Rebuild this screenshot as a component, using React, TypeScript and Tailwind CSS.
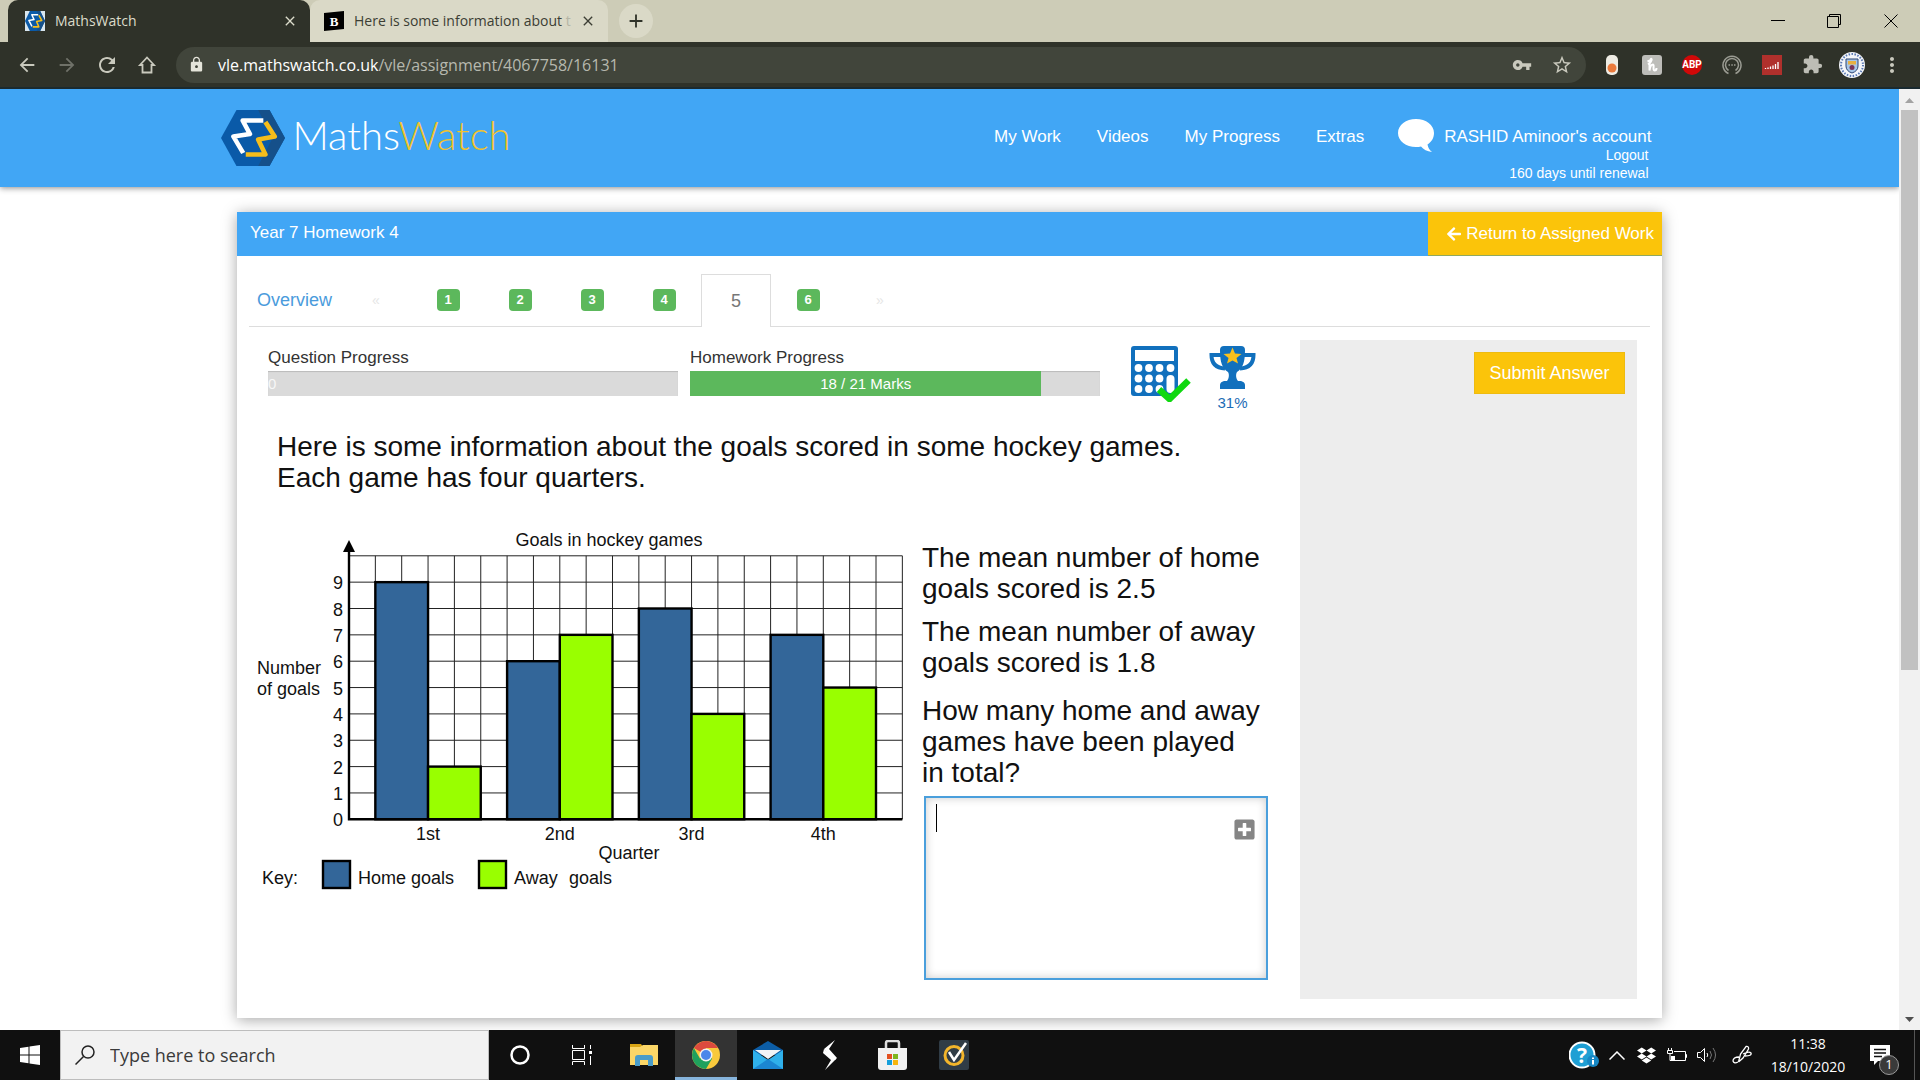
import { useState } from "react";
import type { ReactNode } from "react";
import {
  MdAdd,
  MdArrowBack,
  MdArrowForward,
  MdClose,
  MdExtension,
  MdLock,
  MdMoreVert,
  MdRefresh,
  MdStarBorder,
  MdVpnKey,
} from "react-icons/md";
import { FaArrowLeft, FaDropbox, FaPlusSquare } from "react-icons/fa";

const HOME = "#336699";
const AWAY = "#99ff00";

const quarters = [
  { label: "1st", home: 9, away: 2 },
  { label: "2nd", home: 6, away: 7 },
  { label: "3rd", home: 8, away: 4 },
  { label: "4th", home: 7, away: 5 },
];

/* ---------- browser frame ---------- */

function HexLogo({ className }: { className: string }) {
  return (
    <svg viewBox="0 0 62 56" preserveAspectRatio="none" className={className} aria-hidden="true">
      <path d="M15 0H47L62 28L47 56H15L0 28Z" fill="#0a5aa8" />
      <path d="M47 0L62 28L47 56H36L50 28L36 0Z" fill="#15508a" />
      <g fill="none" strokeWidth="4.500" strokeLinejoin="round">
        <path d="M41 10.500H21L28 24L12 26.500L21.500 43" stroke="#fff" />
        <path d="M43 12L52 26.500L36 29.500L43 44.500H24" stroke="#f5bd1b" />
      </g>
    </svg>
  );
}

function TabStrip() {
  return (
    <div className="flex h-[42px] items-stretch bg-[#cdccb7] pl-2">
      <div className="flex w-[302px] items-center rounded-t-[10px] bg-[#2f3229] pr-3 pl-[17px] text-[#dcdccb]">
        <span className="flex size-5 items-center bg-[#d9e6ee]">
          <HexLogo className="h-5 w-5" />
        </span>
        <span className="ml-[10px] flex-1 text-sm">MathsWatch</span>
        <button type="button" aria-label="Close MathsWatch tab">
          <MdClose size={16} />
        </button>
      </div>
      <div className="flex w-[298px] items-center rounded-t-[10px] bg-[#dad9c7] pr-3 pl-[14px] text-[#3c3e34]">
        <svg viewBox="0 0 20 20" className="size-5" aria-hidden="true">
          <path d="M0 2L20 0V18L0 20Z" fill="#000" />
          <text x="10" y="15" textAnchor="middle" fontSize="13" fontWeight="900" fontFamily="Liberation Serif, serif" fill="#fff">
            B
          </text>
        </svg>
        <span className="ml-[10px] flex-1 overflow-hidden text-sm whitespace-nowrap">
          Here is some information about <span className="text-[#b5b5a5]">t</span>
        </span>
        <button type="button" aria-label="Close tab" className="ml-2">
          <MdClose size={16} />
        </button>
      </div>
      <button
        type="button"
        aria-label="New tab"
        className="ml-[11px] flex size-[34px] items-center justify-center self-center rounded-full bg-[#dad9c7] text-[#303329]"
      >
        <MdAdd size={22} />
      </button>
      <div className="ml-auto flex items-center text-black">
        <button type="button" aria-label="Minimise" className="flex w-14 justify-center">
          <svg viewBox="0 0 14 14" className="size-[14px]" stroke="currentColor">
            <path d="M0 6.500H14" />
          </svg>
        </button>
        <button type="button" aria-label="Restore" className="flex w-14 justify-center">
          <svg viewBox="0 0 14 14" className="size-[14px]" fill="none" stroke="currentColor">
            <path d="M.5 2.500H11.500V13.500H.5ZM2.500 2.500V.5H13.500V10.500H11.500" />
          </svg>
        </button>
        <button type="button" aria-label="Close window" className="flex w-[58px] justify-center">
          <svg viewBox="0 0 14 14" className="size-[14px]" stroke="currentColor">
            <path d="M.5 .5L13.500 13.500M13.500 .5L.5 13.500" />
          </svg>
        </button>
      </div>
    </div>
  );
}

function Extension({ label, children }: { label: string; children: ReactNode }) {
  return (
    <button type="button" aria-label={label} className="flex w-10 items-center justify-center">
      {children}
    </button>
  );
}

function Toolbar() {
  return (
    <div className="flex h-[47px] items-center border-b-2 border-[#1a2a30] bg-[#2f3229] pr-2 pl-[7px] text-[#c9c9bd]">
      <button type="button" aria-label="Back" className="flex w-10 justify-center">
        <MdArrowBack size={22} />
      </button>
      <button type="button" aria-label="Forward" className="flex w-10 justify-center text-[#6f7168]">
        <MdArrowForward size={22} />
      </button>
      <button type="button" aria-label="Reload" className="flex w-10 justify-center">
        <MdRefresh size={24} />
      </button>
      <button type="button" aria-label="Home" className="flex w-10 justify-center">
        <svg viewBox="0 0 20 20" className="size-5" fill="none" stroke="currentColor" strokeWidth="1.800">
          <path d="M10 2.500L17 10H14.500V17.500H5.500V10H3Z" />
        </svg>
      </button>
      <div className="ml-[9px] flex h-9 flex-1 items-center rounded-full bg-[#41453b] pr-1 pl-3">
        <MdLock size={17} className="text-[#e4e4da]" />
        <span className="ml-[13px] flex-1 text-base text-[#b6b8ae]">
          <span className="text-white">vle.mathswatch.co.uk</span>/vle/assignment/4067758/16131
        </span>
        <button type="button" aria-label="Passwords" className="flex w-10 justify-center">
          <MdVpnKey size={20} />
        </button>
        <button type="button" aria-label="Bookmark" className="flex w-10 justify-center">
          <MdStarBorder size={22} />
        </button>
      </div>
      <div className="ml-[6px] flex h-9 items-center">
        <Extension label="Toggle">
          <svg viewBox="0 0 12 20" className="h-5 w-3">
            <rect width="12" height="20" rx="5" fill="#eeece4" />
            <circle cx="6" cy="13" r="4.500" fill="#ea7a3c" />
          </svg>
        </Extension>
        <Extension label="Honey">
          <svg viewBox="0 0 20 20" className="size-5">
            <rect width="20" height="20" rx="3" fill="#bdbdb9" />
            <path
              d="M6 9.500C8 8 10.500 5 9.500 4S7 8 7.500 15.500C8 12 9.500 9.500 11 9.500S10.500 15.500 12.500 15.500 14.500 14 14.500 13M5.500 6.500L8 5.500"
              fill="none"
              stroke="#fff"
              strokeWidth="2"
            />
          </svg>
        </Extension>
        <Extension label="Adblock Plus">
          <span className="flex size-5 items-center justify-center rounded-full bg-[#d10808] font-[Roboto,sans-serif] text-[10px] font-bold text-white">
            ABP
          </span>
        </Extension>
        <Extension label="Recorder">
          <svg viewBox="0 0 20 20" className="size-5" fill="none" stroke="#9b9c93" strokeWidth="1.500">
            <path d="M6.500 18.500A9 9 0 1 1 13.500 18.500M6.500 15.500A6.500 6.500 0 1 1 13.500 15.500" />
            <path d="M6.500 10H8M9.300 10H10.800M12 10H13.500" />
          </svg>
        </Extension>
        <Extension label="Signal">
          <svg viewBox="0 0 20 20" className="size-5">
            <rect width="20" height="20" fill="#b0302c" />
            <path d="M3.500 14V13M6 14V12.500M8.500 14V11.500M11 14V10.500M13.500 14V9M16 14V7" stroke="#fff" strokeWidth="1.300" />
          </svg>
        </Extension>
        <Extension label="Extensions">
          <MdExtension size={21} className="text-[#bdbdb5]" />
        </Extension>
        <Extension label="Profile">
          <svg viewBox="0 0 26 26" className="size-[26px]">
            <circle cx="13" cy="13" r="13" fill="#f4f6fa" />
            <circle cx="13" cy="13" r="11" fill="none" stroke="#5a79b4" strokeWidth="2" strokeDasharray="1.500 1.500" />
            <path d="M7 7H19V14Q19 19 13 21Q7 19 7 14Z" fill="#a7c6e8" stroke="#2c4472" />
            <path d="M9 9H17V12.500H9Z" fill="#e8b040" />
            <circle cx="13" cy="15.500" r="2.500" fill="#7a3458" />
          </svg>
        </Extension>
        <Extension label="Menu">
          <MdMoreVert size={24} />
        </Extension>
      </div>
    </div>
  );
}

function Scrollbar() {
  return (
    <div className="flex w-[21px] shrink-0 flex-col items-center bg-[#f1f1f1]" aria-hidden="true">
      <svg viewBox="0 0 21 21" className="size-[21px]">
        <path d="M6 14L10.500 9L15 14Z" fill="#a3a3a3" />
      </svg>
      <div className="h-[560px] w-[17px] bg-[#c1c1c1]" />
      <svg viewBox="0 0 21 21" className="mt-auto size-[21px]">
        <path d="M6 8L10.500 13L15 8Z" fill="#505050" />
      </svg>
    </div>
  );
}

/* ---------- site ---------- */

function SiteHeader() {
  const links = ["My Work", "Videos", "My Progress", "Extras"];

  return (
    <header className="bg-[#41a6f5] shadow-[0_1px_6px_rgba(0,0,0,0.45)]">
      <div className="mx-auto flex h-[98px] max-w-[1458px] items-start pr-[27px]">
        <a href="#home" aria-label="MathsWatch home" className="flex items-start gap-2 pt-[21px]">
          <HexLogo className="h-[56px] w-[64px]" />
          <span className="font-[Lato,sans-serif] text-[40px] leading-[50px] font-light text-white">
            Maths<span className="text-[#f2c32c]">Watch</span>
          </span>
        </a>
        <nav className="mt-9 ml-auto flex gap-9 text-[17px] leading-6 text-white">
          {links.map((link) => (
            <a key={link} href="#nav">
              {link}
            </a>
          ))}
        </nav>
        <svg viewBox="0 0 36 33" className="mt-[30px] ml-[34px] h-[33px] w-9" aria-hidden="true">
          <path
            d="M18 0C28 0 36 6 36 14C36 19 33.500 23 29.500 25.500C30 28.500 31.500 31 34 33C29 32.500 25.500 30.500 23 27.500C21.500 28 20 28 18 28C8 28 0 22 0 14S8 0 18 0Z"
            fill="#fff"
          />
        </svg>
        <div className="mt-9 ml-[10px] flex flex-col items-end text-white">
          <a href="#account" className="text-[17px] leading-6">
            RASHID Aminoor's account
          </a>
          <a href="#logout" className="-mt-[3px] pr-[3px] text-sm leading-[18px]">
            Logout
          </a>
          <span className="pr-[3px] text-sm leading-[18px]">160 days until renewal</span>
        </div>
      </div>
    </header>
  );
}

function QuestionTabs() {
  return (
    <nav className="mx-3 mt-[18px] flex h-[53px] gap-0.5 border-b border-[#dddddd] text-lg">
      <a href="#overview" className="flex w-[90px] items-center px-2 text-[#4a9bdc]">
        Overview
      </a>
      <a href="#prev" aria-label="Previous" className="flex w-[70px] items-center justify-center text-sm text-[#e6e6e6]">
        «
      </a>
      {[1, 2, 3, 4, 5, 6].map((n) =>
        n === 5 ? (
          <a
            key={n}
            href="#q5"
            aria-current="page"
            className="-mb-px flex w-[70px] items-center justify-center border border-b-0 border-[#dddddd] bg-white text-[#777777]"
          >
            5
          </a>
        ) : (
          <a key={n} href="#question" className="flex w-[70px] items-center justify-center">
            <span className="flex h-[22px] w-[23px] items-center justify-center rounded bg-[#5cb85c] text-[13px] font-bold text-white">
              {n}
            </span>
          </a>
        )
      )}
      <a href="#next" aria-label="Next" className="flex w-[70px] items-center justify-center text-sm text-[#e6e6e6]">
        »
      </a>
    </nav>
  );
}

function ProgressRow() {
  return (
    <div className="flex items-start pt-[6px] pl-[19px] text-[#333333]">
      <div className="w-[410px]">
        <div className="text-[17px] leading-6">Question Progress</div>
        <div className="mt-px h-[25px] bg-[#dadada] text-[15px] leading-[25px] text-[#f7f7f7] shadow-[inset_0_1px_1px_rgba(0,0,0,0.15)]">
          0
        </div>
      </div>
      <div className="ml-3 w-[410px]">
        <div className="text-[17px] leading-6">Homework Progress</div>
        <div className="mt-px h-[25px] bg-[#dadada] shadow-[inset_0_1px_1px_rgba(0,0,0,0.15)]">
          <div
            className="h-[25px] bg-[#5cb85c] text-center text-[15px] leading-[25px] text-white"
            style={{ width: `${(18 / 21) * 100}%` }}
          >
            18 / 21 Marks
          </div>
        </div>
      </div>
      <svg viewBox="0 0 60 56" className="ml-[31px] h-[56px] w-[60px]" role="img" aria-label="Calculator allowed">
        <rect width="47" height="50" rx="3" fill="#1170bd" />
        <rect x="4" y="4" width="39" height="11" fill="#fff" />
        {[22, 32.5, 43].map((y) =>
          [7.5, 18, 28.5, 39.5].map((x) =>
            x > 39 && y > 22 ? null : <circle key={`${x}-${y}`} cx={x} cy={y} r="3.900" fill="#fff" />
          )
        )}
        <rect x="35.500" y="29" width="8" height="18" rx="4" fill="#fff" />
        <path d="M28 43.500L38.500 53L57.500 34.500" fill="none" stroke="#10d810" strokeWidth="6.500" />
      </svg>
      <div className="ml-[18px] w-[47px] text-center">
        <svg viewBox="0 0 47 43" className="h-[43px] w-[47px]" role="img" aria-label="Trophy">
          <path d="M14 9H2.500C2.500 17 7 22 16 22.500M33 9H44.500C44.500 17 40 22 31 22.500" fill="none" stroke="#1170bd" strokeWidth="4" />
          <path d="M11 4Q11 0 15 0H32Q36 0 36 4C36 16 34 22 28 26C26.500 28 27 33 29 35H32Q36 36 36 39V43H11V39Q11 36 15 35H18C20 33 20.500 28 19 26C13 22 11 16 11 4Z" fill="#1170bd" />
          <path d="M23.500 1.500L26 7.500L32.500 8L27.500 12L29 17.500L23.500 14.500L18 17.500L19.500 12L14.500 8L21 7.500Z" fill="#fbc11c" />
        </svg>
        <div className="text-[15px] leading-[27px] text-[#1c6cb5]">31%</div>
      </div>
    </div>
  );
}

function GoalsChart() {
  const cell = 26.35;
  const left = 100;
  const base = 294.3;
  const right = left + cell * 21;
  const top = base - cell * 10;

  return (
    <svg
      viewBox="0 0 656 385"
      className="h-[385px] w-[656px] shrink-0 font-[Liberation_Sans,Arial,sans-serif] text-lg"
      role="img"
      aria-label="Goals in hockey games"
      fill="#111"
    >
      <text x="360" y="21" textAnchor="middle">
        Goals in hockey games
      </text>
      <g stroke="#222" strokeWidth="1">
        {Array.from({ length: 21 }, (_, i) => (
          <line key={`v${i}`} x1={left + cell * (i + 1)} x2={left + cell * (i + 1)} y1={top} y2={base} />
        ))}
        {Array.from({ length: 10 }, (_, i) => (
          <line key={`h${i}`} x1={left} x2={right} y1={base - cell * (i + 1)} y2={base - cell * (i + 1)} />
        ))}
      </g>
      {quarters.map((q, i) => {
        const x = left + cell * (1 + i * 5);
        return (
          <g key={q.label}>
            <g stroke="#000" strokeWidth="2.400">
              <rect x={x} y={base - cell * q.home} width={cell * 2} height={cell * q.home} fill={HOME} />
              <rect x={x + cell * 2} y={base - cell * q.away} width={cell * 2} height={cell * q.away} fill={AWAY} />
            </g>
            <text x={x + cell * 2} y="315" textAnchor="middle">
              {q.label}
            </text>
          </g>
        );
      })}
      <path d={`M${left} 20V${base}H${right}`} fill="none" stroke="#000" strokeWidth="2.400" />
      <path d={`M${left - 6} 27L${left} 15L${left + 6} 27Z`} fill="#000" />
      {Array.from({ length: 10 }, (_, n) => (
        <text key={n} x="94" y={base - cell * n + 7} textAnchor="end">
          {n}
        </text>
      ))}
      <text x="8" y="149">
        Number
      </text>
      <text x="8" y="170">
        of goals
      </text>
      <text x="380" y="334" textAnchor="middle">
        Quarter
      </text>
      <text x="13" y="359">
        Key:
      </text>
      <rect x="74" y="336" width="27" height="27" fill={HOME} stroke="#000" strokeWidth="2.400" />
      <text x="109" y="359">
        Home goals
      </text>
      <rect x="230" y="336" width="27" height="27" fill={AWAY} stroke="#000" strokeWidth="2.400" />
      <text x="265" y="359">
        Away
      </text>
      <text x="320" y="359">
        goals
      </text>
    </svg>
  );
}

function AnswerBox() {
  const [answer, setAnswer] = useState("");

  return (
    <div className="relative mt-2 ml-0.5 w-[344px]">
      <textarea
        aria-label="Your answer"
        value={answer}
        onChange={(e) => setAnswer(e.target.value)}
        className="block h-[184px] w-full resize-none border-2 border-[#4a9fdc] px-3 py-2 text-[28px] leading-[31px] shadow-[inset_0_0_10px_rgba(0,0,0,0.2)] outline-none"
      />
      {/* caret, drawn so it shows before the box takes focus */}
      {answer === "" && <span className="pointer-events-none absolute top-2 left-3 h-7 w-px bg-black" />}
      <button type="button" aria-label="Insert symbol" className="absolute top-[22px] right-3 text-[#858585]">
        <FaPlusSquare size={23} />
      </button>
    </div>
  );
}

function Assignment() {
  return (
    <main className="mx-auto mt-[25px] mb-3 max-w-[1425px] bg-white pb-[19px] shadow-[0_2px_14px_rgba(0,0,0,0.35)]">
      <div className="flex items-stretch justify-between bg-[#41a6f5] text-[17px] leading-6 text-white">
        <h1 className="px-[13px] pt-[9px] pb-[11px]">Year 7 Homework 4</h1>
        <a
          href="#assigned"
          className="flex w-[234px] items-center justify-end gap-1 border-b border-[#8fa860] bg-[#fbc40a] pr-2 whitespace-nowrap"
        >
          <FaArrowLeft size={16} />
          Return to Assigned Work
        </a>
      </div>
      <QuestionTabs />
      <div className="mt-[13px] flex px-3">
        <section className="min-w-0 flex-1">
          <ProgressRow />
          <p className="mt-[15px] pl-7 text-[28px] leading-[31px] text-[#111111]">
            Here is some information about the goals scored in some hockey games.
            <br />
            Each game has four quarters.
          </p>
          <div className="mt-8 flex items-start">
            <GoalsChart />
            <div className="ml-[17px] pt-[17px] text-[28px] leading-[31px] whitespace-nowrap text-[#111111]">
              <p>
                The mean number of home
                <br />
                goals scored is 2.5
              </p>
              <p className="mt-3">
                The mean number of away
                <br />
                goals scored is 1.8
              </p>
              <p className="mt-[17px]">
                How many home and away
                <br />
                games have been played
                <br />
                in total?
              </p>
              <AnswerBox />
            </div>
          </div>
        </section>
        <aside className="mr-[13px] flex h-[659px] w-[337px] shrink-0 items-start justify-end bg-[#ededed] p-3">
          <button type="button" className="h-[42px] w-[151px] border border-[#eebb10] bg-[#fbc40a] text-lg text-white">
            Submit Answer
          </button>
        </aside>
      </div>
    </main>
  );
}

/* ---------- taskbar ---------- */

function TaskButton({ label, active, children }: { label: string; active?: boolean; children: ReactNode }) {
  return (
    <button
      type="button"
      aria-label={label}
      className={
        active
          ? "flex w-[62px] items-center justify-center border-b-[3px] border-[#86b4dc] bg-[#333333] pt-[3px]"
          : "flex w-[62px] items-center justify-center"
      }
    >
      {children}
    </button>
  );
}

function Taskbar() {
  return (
    <footer className="flex h-[50px] shrink-0 items-stretch bg-[#101010] text-white">
      <button type="button" aria-label="Start" className="flex w-[60px] items-center justify-center">
        <svg viewBox="0 0 20 20" className="size-5" fill="#fff">
          <path d="M0 3L8.500 1.800V9.500H0ZM9.500 1.600L20 0V9.500H9.500ZM0 10.500H8.500V18.200L0 17ZM9.500 10.500H20V20L9.500 18.400Z" />
        </svg>
      </button>
      <label className="flex w-[429px] items-center border border-[#bdbdbd] bg-[#f2f2f2] pl-[14px]">
        <svg viewBox="0 0 20 20" className="size-5" fill="none" stroke="#222" strokeWidth="1.500">
          <circle cx="13" cy="7" r="6" />
          <path d="M8.500 11.500L.5 19.500" />
        </svg>
        <input
          type="text"
          aria-label="Search"
          placeholder="Type here to search"
          className="ml-[15px] flex-1 bg-transparent text-lg outline-none placeholder:text-[#3a3a3a]"
        />
      </label>
      <TaskButton label="Cortana">
        <svg viewBox="0 0 20 20" className="size-5">
          <circle cx="10" cy="10" r="8.500" fill="none" stroke="#fff" strokeWidth="2.500" />
        </svg>
      </TaskButton>
      <TaskButton label="Task view">
        <svg viewBox="0 0 20 20" className="size-5" fill="none" stroke="#fff">
          <path d="M.5 0V3.500H12.500V0M.5 20V16.500H12.500V20M.5 5.500H12.500V14.500H.5ZM18.500 0V4M18.500 11V20" />
          <path d="M17 6H20V9H17Z" fill="#fff" stroke="none" />
        </svg>
      </TaskButton>
      <TaskButton label="File Explorer">
        <svg viewBox="0 0 28 24" className="h-6 w-7">
          <path d="M0 1H11L13 4H0Z" fill="#d9a514" />
          <path d="M0 4H10L13 2H28V22H0Z" fill="#fbd667" />
          <path d="M5 23V15Q5 12 8 12H20Q23 12 23 15V23H18V17H10V23Z" fill="#4a9cc9" />
        </svg>
      </TaskButton>
      <TaskButton label="Chrome" active>
        <svg viewBox="0 0 28 28" className="size-7">
          <circle cx="14" cy="14" r="14" fill="#f9c93c" />
          <path d="M14 14L1.900 7A14 14 0 0 1 26.100 7H14Z" fill="#dc4b3e" />
          <path d="M1.900 7A14 14 0 0 0 14 28L20.100 17.500L14 14L7.900 17.500Z" fill="#1fa15d" />
          <circle cx="14" cy="14" r="6.500" fill="#f2f2f2" />
          <circle cx="14" cy="14" r="5" fill="#4b86ea" />
        </svg>
      </TaskButton>
      <TaskButton label="Mail">
        <svg viewBox="0 0 30 28" className="h-7 w-[30px]">
          <path d="M0 9L15 0L30 9V14H0Z" fill="#0c5da6" />
          <path d="M0 9L15 19L30 9V28H0Z" fill="#2fb0ea" />
          <path d="M2 9H28L15 18Z" fill="#f1f4f6" />
          <path d="M0 28L15 18L30 28Z" fill="#1b86d2" />
        </svg>
      </TaskButton>
      <TaskButton label="Stylus">
        <svg viewBox="0 0 14 30" className="h-[30px] w-[14px]" fill="#fff">
          <path d="M12 0L1 9L9 18L12 20L14 18L6 9Z" />
          <path d="M1 9L0 13L8 20L2 30L13 19Z" />
        </svg>
      </TaskButton>
      <TaskButton label="Microsoft Store">
        <svg viewBox="0 0 29 30" className="h-[30px] w-[29px]">
          <path d="M8 9V3Q8 1 10 1H19Q21 1 21 3V9" fill="none" stroke="#ddd" strokeWidth="2.500" />
          <path d="M0 8H29V27Q29 30 26 30H3Q0 30 0 27Z" fill="#f1f1f1" />
          <path d="M9 14H14V19H9Z" fill="#e3501f" />
          <path d="M15 14H20V19H15Z" fill="#7db51c" />
          <path d="M9 20H14V25H9Z" fill="#169fdb" />
          <path d="M15 20H20V25H15Z" fill="#f7b50c" />
        </svg>
      </TaskButton>
      <TaskButton label="Norton">
        <svg viewBox="0 0 30 30" className="size-[30px]">
          <rect width="30" height="30" rx="2" fill="#303c46" />
          <circle cx="15" cy="15.500" r="9" fill="none" stroke="#f2b52b" strokeWidth="3" />
          <path d="M10 12L15 20L27 3" fill="none" stroke="#fff" strokeWidth="2.500" />
        </svg>
      </TaskButton>
      <div className="ml-auto flex items-center">
        <svg viewBox="0 0 30 28" className="h-7 w-[30px]" aria-hidden="true">
          <circle cx="13" cy="14" r="12.500" fill="#1e9fd4" stroke="#fff" strokeWidth="2" />
          <text x="13" y="21.500" textAnchor="middle" fontSize="21" fontWeight="700" fill="#fff">
            ?
          </text>
          <circle cx="24" cy="20" r="6" fill="#1787c4" />
          <path d="M24 16.500V18M24 19V23.500" stroke="#fff" strokeWidth="2" />
        </svg>
        <svg viewBox="0 0 16 9" className="ml-[10px] h-[9px] w-4" fill="none" stroke="#fff" strokeWidth="1.500" aria-hidden="true">
          <path d="M.5 8.500L8 1L15.500 8.500" />
        </svg>
        <FaDropbox size={19} className="ml-3" />
        <svg viewBox="0 0 20 14" className="ml-[11px] h-[14px] w-5" fill="none" stroke="#fff" aria-hidden="true">
          <path d="M7 3.500H18.500V12.500H4.500V8M18.500 6.500H19.500V9.500H18.500M1.500 0V2M4.500 0V2M.5 2.500H5.500V5.500H.5ZM3 6V12.500H5" />
          <path d="M5 8H8V12H5Z" fill="#fff" stroke="none" />
        </svg>
        <svg viewBox="0 0 20 18" className="ml-[10px] h-[18px] w-5" fill="none" stroke="#fff" aria-hidden="true">
          <path d="M.5 6.500H3.500L7.500 2.500V15.500L3.500 11.500H.5ZM10 7Q11.500 9 10 11" />
          <path d="M13 5Q16 9 13 13M16 2Q21 9 16 16" stroke="#777" />
        </svg>
        <svg viewBox="0 0 20 20" className="ml-[15px] size-5" fill="none" stroke="#fff" strokeWidth="1.300" aria-hidden="true">
          <path d="M6.500 17L8.500 9L14 1.500Q17 1 16.500 4L11 13L6.500 17M11 9Q17 6 19 8Q20 11 13 11M7 12Q1 12 1 16Q2 19 6 17" />
        </svg>
        <time className="ml-[18px] w-[76px] text-center text-sm leading-[23px]">
          11:38
          <br />
          18/10/2020
        </time>
        <div className="relative mr-[5px] ml-6 flex h-[50px] w-[45px] items-center border-r border-[#555555]">
          <svg viewBox="0 0 20 20" className="size-5" aria-hidden="true">
            <path d="M0 0H20V16H8L4 20V16H0Z" fill="#fff" />
            <path d="M4 4.500H16M4 8H16M4 11.500H12" stroke="#101010" strokeWidth="1.500" />
          </svg>
          <span className="absolute right-[15px] bottom-[5px] flex size-5 items-center justify-center rounded-full border border-[#999999] bg-[#3a3a3a] text-[13px]">
            1
          </span>
        </div>
      </div>
    </footer>
  );
}

export default function App() {
  return (
    <div className="flex min-h-screen flex-col bg-white font-['Open_Sans','Noto_Sans',sans-serif]">
      <TabStrip />
      <Toolbar />
      <div className="flex flex-1 items-stretch">
        <div className="min-w-0 flex-1 overflow-hidden font-[Liberation_Sans,Arial,sans-serif]">
          <SiteHeader />
          <Assignment />
        </div>
        <Scrollbar />
      </div>
      <Taskbar />
    </div>
  );
}
